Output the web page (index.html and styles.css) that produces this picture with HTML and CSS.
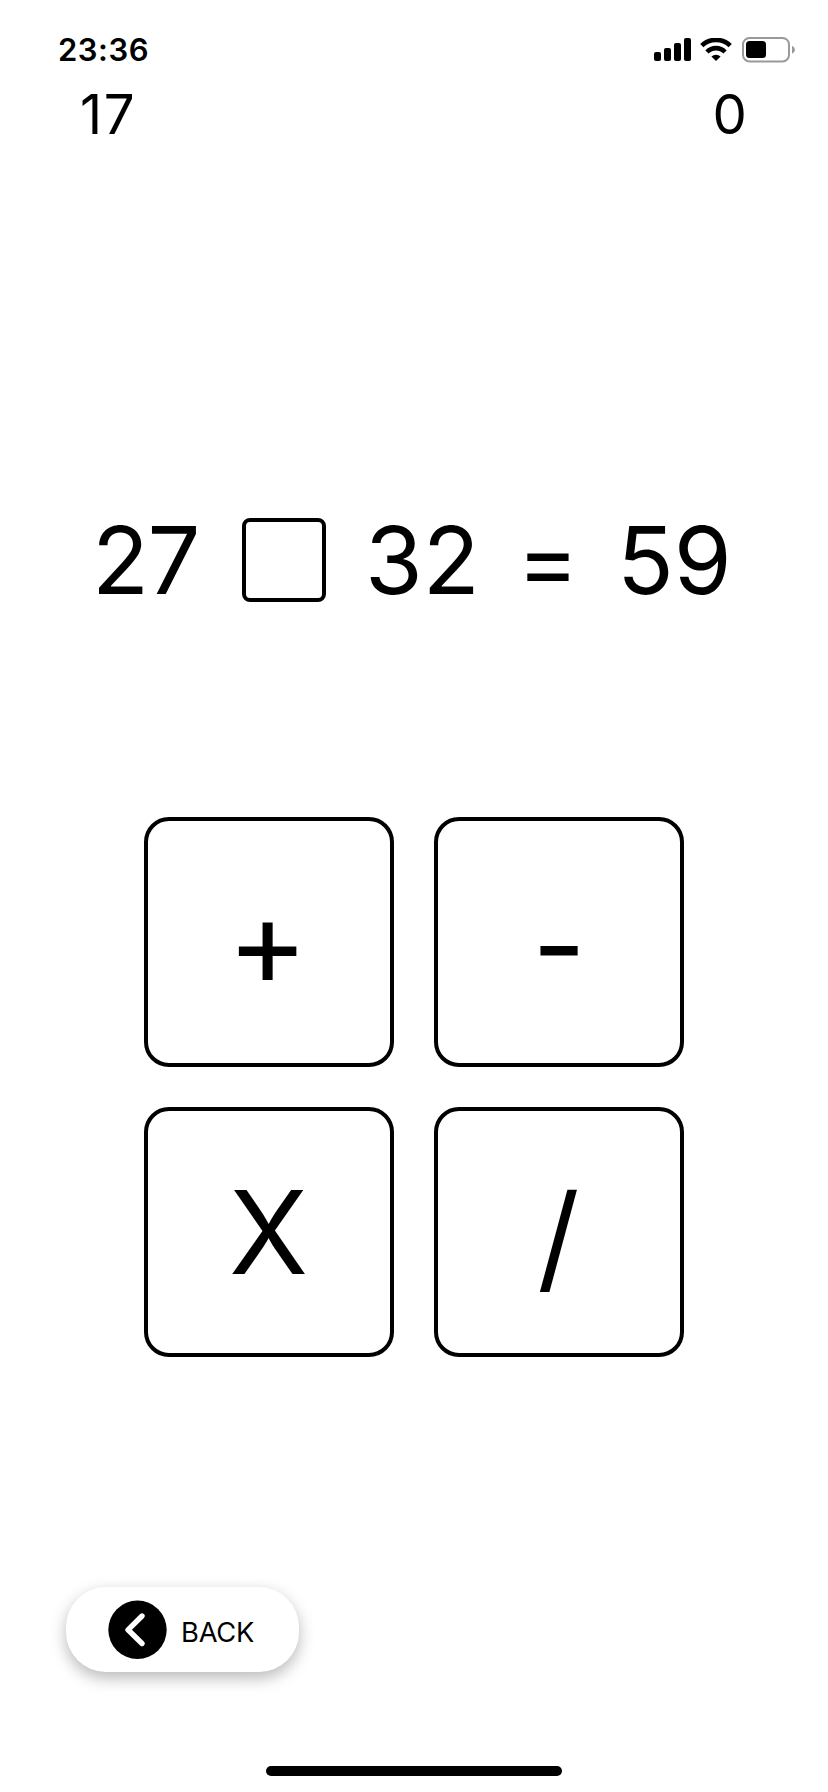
FILE: index.html
```html
<!DOCTYPE html>
<html lang="en">
<head>
<meta charset="utf-8">
<title>Math Game</title>
<link rel="stylesheet" href="styles.css">
</head>
<body>
<main class="screen">
  <div class="status">
    <span class="time">23:36</span>
    <svg class="signal" width="38" height="24" viewBox="0 0 38 24">
      <rect x="0" y="14" width="7" height="9" rx="2"/>
      <rect x="10" y="10" width="7" height="13" rx="2"/>
      <rect x="20" y="5" width="7" height="18" rx="2"/>
      <rect x="30" y="0" width="7" height="23" rx="2"/>
    </svg>
    <svg class="wifi" width="32" height="24" viewBox="0 0 32 24">
      <path class="arc" d="M1.8 7.6 A20.5 20.5 0 0 1 30.2 7.6"/>
      <path class="arc" d="M7 14 A12.4 12.4 0 0 1 25 14"/>
      <path d="M16 23 L11.4 18.6 A6.8 6.8 0 0 1 20.6 18.6 Z"/>
    </svg>
    <svg class="battery" width="54" height="26" viewBox="0 0 54 26">
      <rect class="shell" x="1" y="1" width="46" height="23.4" rx="6.5"/>
      <rect x="4" y="4" width="20" height="17" rx="3.5"/>
      <path class="cap" d="M50 8.7 Q53 10 53 12.7 Q53 15.4 50 16.7 Z"/>
    </svg>
  </div>
  <header class="scores">
    <span class="count">17</span>
    <span>0</span>
  </header>
  <section class="equation">
    <span class="term first">27</span>
    <span class="blank"></span>
    <span class="term second">32</span>
    <span class="equals">=</span>
    <span class="term result">59</span>
  </section>
  <section class="pad">
    <button class="key plus">+</button>
    <button class="key minus">-</button>
    <button class="key times">X</button>
    <button class="key divide">/</button>
  </section>
  <button class="back">
    <svg width="59" height="59" viewBox="0 0 59 59">
      <circle cx="29.5" cy="29.8" r="29.2"/>
      <path class="chevron" d="M34 16 L20 29.8 L34 43.5"/>
    </svg>
    <span>BACK</span>
  </button>
  <div class="home"></div>
</main>
</body>
</html>
```

FILE: styles.css
```css
* { box-sizing: border-box; }
body {
  margin: 0;
  background: #fff;
  color: #000;
  font-family: Inter, "Liberation Sans", sans-serif;
}
.screen {
  display: flex;
  flex-direction: column;
  width: 828px;
  height: 1792px;
  overflow: hidden;
}
.status {
  display: flex;
  align-items: flex-start;
  height: 84px;
  padding: 38px 32px 0 58px;
}
.time {
  margin-right: auto;
  font-size: 31px;
  font-weight: 600;
  line-height: 23px;
  letter-spacing: 0.5px;
}
.wifi { margin-left: 8px; }
.arc { fill: none; stroke: #000; stroke-width: 4.6; }
.battery { margin: -1px 0 0 10px; }
.shell { fill: none; stroke: #999; stroke-width: 2; }
.cap { fill: #999; }
.scores {
  display: flex;
  justify-content: space-between;
  height: 60px;
  padding: 0 81px 0 80px;
  font-size: 54.5px;
  line-height: 60px;
}
.count { letter-spacing: 1.5px; }
.equation {
  display: flex;
  align-items: center;
  height: 120px;
  margin-top: 356px;
  padding-left: 92px;
  font-size: 93.5px;
  line-height: 120px;
}
.term { width: 118px; }
.first { letter-spacing: -1.5px; }
.blank {
  width: 84px;
  height: 84px;
  margin: 0 39px 0 32px;
  border: 4px solid #000;
  border-radius: 8px;
}
.equals { width: 70px; margin: 0 30px 0 34px; }
.pad {
  display: grid;
  grid-template-columns: 250px 250px;
  grid-auto-rows: 250px;
  justify-content: center;
  gap: 40px;
  margin-top: 197px;
}
.key {
  margin: 0;
  padding: 0;
  border: 4px solid #000;
  border-radius: 25px;
  background: #fff;
  color: #000;
  font-family: inherit;
  font-size: 116.5px;
  line-height: 242px;
  text-align: center;
}
.plus { padding: 0 3px 1px 0; font-size: 122px; }
.minus { padding-top: 3px; }
.times { padding-right: 1px; font-size: 116px; }
.divide { padding: 4px 1px 0 0; font-size: 117.5px; }
.back {
  display: flex;
  align-items: center;
  width: 233px;
  height: 85px;
  margin: 230px 0 0 66px;
  padding: 0 0 0 42px;
  border: 0;
  border-radius: 40px;
  background: #fff;
  color: #000;
  font-family: inherit;
  font-size: 27.3px;
  box-shadow: 0 6px 16px rgba(0, 0, 0, 0.28);
}
.back span { padding: 5px 0 0 14px; letter-spacing: -0.2px; }
.chevron {
  fill: none;
  stroke: #fff;
  stroke-width: 5.4;
  stroke-linecap: round;
  stroke-linejoin: round;
}
.home {
  width: 296px;
  height: 10px;
  margin: 94px auto 0;
  border-radius: 5px;
  background: #000;
}
```
